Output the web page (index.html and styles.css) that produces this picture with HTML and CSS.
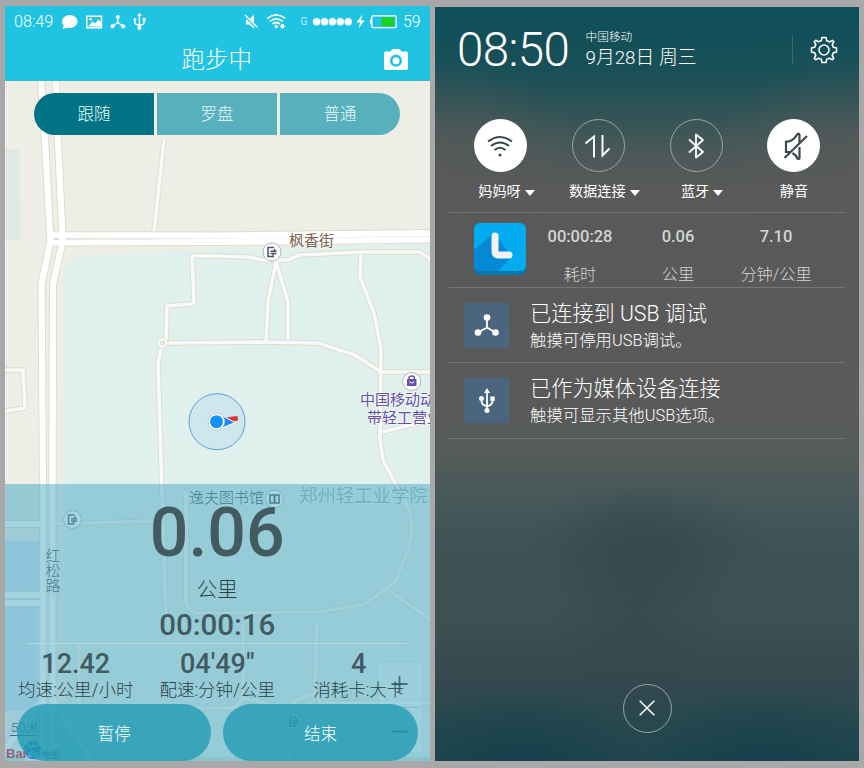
FILE: index.html
```html
<!DOCTYPE html>
<html lang="zh-CN">
<head>
<meta charset="utf-8">
<title>跑步中</title>
<link rel="stylesheet" href="styles.css">
</head>
<body>
<main class="board">
<section class="phone run">
  <header class="topbar">
    <div class="status">
      <span class="clock">08:49</span>
      <svg class="status-left" width="90" height="20" viewBox="60 10 90 20">
        <g fill="#fff">
          <ellipse cx="69.800" cy="20.500" rx="7.800" ry="6.500"/><path d="M64 24l-1.500 4 6-1.500z"/>
          <path fill-rule="evenodd" d="M86 14.500h16.200V27.500H86zM87.500 16v10h13.200V16z"/>
          <path d="M88 25.500l4.500-5 2.500 2 3.500-4 2.500 3v4z"/><circle cx="90.500" cy="18.300" r="1.300"/>
          <circle cx="117.800" cy="16" r="2"/><circle cx="112.500" cy="25.300" r="2.100"/><circle cx="123.200" cy="25.300" r="2.100"/>
          <path d="M139.400 11.800l2.300 3.200h-4.600z"/><circle cx="139.400" cy="27" r="2"/><circle cx="134.900" cy="18.600" r="1.500"/><path d="M142.600 17h3v3h-3z"/>
        </g>
        <g fill="none" stroke="#fff" stroke-width="1.400"><path d="M117.800 16v5.500l-5.300 3.800M117.800 21.500l5.400 3.800M139.400 14v12M134.900 19v2.500q0 2 4.500 3M144.100 19v2.500q0 2-4.700 3"/></g>
      </svg>
      <svg class="status-right" width="160" height="20" viewBox="242 10 160 20">
        <path fill="#fff" d="M246 18.300h3.200l4.800-4.500v14l-4.800-4.200H246z"/>
        <path d="M244.500 14.500l12.500 12" stroke="#20c4e2" stroke-width="3"/><path d="M245 14l12.500 12.500" stroke="#fff" stroke-width="1.400"/>
        <g fill="none" stroke="#fff" stroke-width="1.700"><path d="M267.200 17.300q9-7 18 0M269.800 20.300q6.500-5 13 0M272.500 23q3.700-3 7.400 0"/></g>
        <circle cx="276.200" cy="25.500" r="1.700" fill="#fff"/><path d="M281 23h3v2h1.500l-3 3-3-3h1.500z" fill="#fff"/>
        <text x="300.500" y="24.300" class="net">G</text>
        <g fill="#fff"><circle cx="316.600" cy="20.700" r="3.700"/><circle cx="324.500" cy="20.700" r="3.700"/><circle cx="332.400" cy="20.700" r="3.700"/><circle cx="340.300" cy="20.700" r="3.700"/><circle cx="348.200" cy="20.700" r="3.700"/>
        <path d="M362.500 13.500l-6 8h3.700l-1.700 6 6-8h-3.600z"/><path d="M370 18.500h1.500v4.500H370z"/></g>
        <rect x="371.800" y="14.800" width="24.400" height="11.800" rx="1" fill="none" stroke="#fff" stroke-width="1.300"/>
        <path fill="#1bd31c" d="M381.500 16.300H394v9h-12.500z"/>
      </svg>
      <span class="battery">59</span>
    </div>
    <div class="titlebar">
      <h1>跑步中</h1>
      <svg class="camera" width="24" height="23" viewBox="0 0 24 23"><path fill="#fff" d="M9 1h6q1 0 1.500 1l.7 1.500H22q2 0 2 2v14.500q0 2-2 2H2q-2 0-2-2V5.500q0-2 2-2h4.800L7.500 2Q8 1 9 1z"/><circle cx="12" cy="12.700" r="4.800" fill="none" stroke="#20c4e2" stroke-width="2.600"/></svg>
    </div>
  </header>

  <div class="map">
    <svg class="map-art" width="424.500" height="680" viewBox="5 81 424.500 680">
      <defs>
        <g id="exit"><circle r="9" fill="#fff" stroke="#a9b9b6" stroke-width="1"/><path d="M2-4.500h-6v9h6M-1.500-.8h6M2.500-3v2M-1.500 1.500h6M1 1.500v2" fill="none" stroke="#456" stroke-width="1.500"/></g>
        <path id="side" d="M164 140l-10 92M154 231v8M5 370h18l2 38-20 3
          M216 256h-24l2 45-2 3-25 2-1 38M166 343l95-1 57 1 37 12 26 17h50M162 346l-4 17 4 130 4 125
          M216 256l34 1 11 3h27l11-5 63-3h57l9 5 2 4M276 262l-8 40-2 39M276 262l12 40v37
          M361 253l-1 24 14 36 7 36-1 91 3 20 27 52 2 18-3 18-14 34-30 22-45 8-125 1-6-4-3-6v-110M382 432l48-12M393 593l40 29
          M45 524l115-3M317 623l-2 65 5 15h112M243 625v73l-8 10H85q-6-2-6-7v-56M243 698l24 5 3 60M270 727h20v35M290 727l4-26 21-8"/>
      </defs>
      <path fill="#efeee6" d="M5 81h425v680H5z"/>
      <path fill="#e0eae5" d="M5 149h14.500l1 91.500H5zM5 484h35v36H5z"/>
      <path fill="#cfdff0" d="M5 541h35v50H5zM5 606h33v105H5z"/>
      <path fill="#e0f0ec" d="M64 268l16-12 136-7 214-5v517H66z"/>
      <path fill="#c4e2cc" d="M60 761v-38l27 34h343v4zM5 757h20v4H5z"/>
      <g fill="none" stroke-linejoin="round"><use href="#side" stroke="#d9dccd" stroke-width="5.400"/><use href="#side" stroke="#f9f9f7" stroke-width="3.700"/>
      <circle cx="162.500" cy="343" r="3.800" stroke="#d9dccd" stroke-width="4"/><circle cx="162.500" cy="343" r="3.800" stroke="#f9f9f7" stroke-width="2.600"/>
      <g stroke="#d9dccd" stroke-width="8"><path d="M41 81l4 60 5.500 100-9 43 1.500 200v277M56 81l2 60 4.700 100-9.700 43-.5 200v277M49 235l167 .5 214-2.500M49 242.500l167-.5 214-2.500M5 524h40M5 595h38M5 603h38M43 700l-40 52M53 700l40 61"/></g>
      <g stroke="#fff" stroke-width="6.200"><path d="M41 81l4 60 5.500 100-9 43 1.500 200v277M56 81l2 60 4.700 100-9.700 43-.5 200v277M49 235l167 .5 214-2.500M49 242.500l167-.5 214-2.500M5 524h40M5 595h38M5 603h38M43 700l-40 52M53 700l40 61"/></g>
      <path d="M54 239h5" stroke="#d9dccd" stroke-width="2"/><path d="M68 239h84" stroke="#e2e4da"/></g>
      <circle cx="217" cy="421.700" r="28" fill="#cfe6ec" stroke="#5ba0dc" stroke-width="1"/>
      <path d="M226 417.500l10-1.500q2 0 2 2v2.500l-11 3z" fill="#df3a42"/>
      <path d="M222 415.500l13 7-13 5.500z" fill="#1a8cf4" stroke="#fff"/>
      <circle cx="216.500" cy="421.700" r="8.200" fill="#fff" stroke="#bbb" stroke-width=".7"/><circle cx="216.500" cy="421.700" r="6.500" fill="#1490fa"/>
      <use href="#exit" x="272" y="252"/><use href="#exit" x="72.500" y="519.500"/><use href="#exit" x="294" y="721.500"/>
      <circle cx="411.700" cy="381.500" r="9" fill="#fff" stroke="#a9b9b6"/>
      <path d="M407 379h9.500v7H407z" fill="#6650b0"/><path d="M409 379v-1q0-2 2.700-2t2.700 2v1" fill="none" stroke="#6650b0" stroke-width="1.500"/><path d="M409.300 381.500q2.400 3 4.800 0" fill="none" stroke="#fff" stroke-width="1.200"/>
      <circle cx="274.500" cy="499" r="9" fill="#fff" stroke="#a9b9b6"/><path d="M270 495h4.300v8H270zM274.700 495h4.300v8h-4.300z" fill="none" stroke="#345" stroke-width="1.500"/>
      <g class="place">
        <text class="street" x="289" y="245.500">枫香街</text>
        <text class="shop" x="360" y="405">中国移动动</text>
        <text class="shop" x="367" y="422.500">带轻工营业</text>
        <text class="library" x="189" y="503">逸夫图书馆</text>
        <text class="school" x="299" y="502">郑州轻工业学院</text>
        <text class="road" x="45.500" y="560.500">红</text><text class="road" x="45.500" y="575.500">松</text><text class="road" x="45.500" y="590.500">路</text>
      </g>
      <rect x="378" y="662" width="44" height="91" rx="2" fill="#fff" fill-opacity=".45" stroke="#d3e0e0"/>
      <path d="M382 707.500h37" stroke="#b7c6c8"/><path d="M391.500 684h16M399.500 676v16M391.500 731.500h16" stroke="#222" stroke-width="1.800"/>
      <text class="scale" x="11" y="732">50米</text><path d="M10 735.500h27" stroke="#223"/>
      <g class="baidu"><text x="6" y="758" fill="#d8001e">Bai</text><g fill="#0837d8"><ellipse cx="33" cy="753" rx="7.500" ry="6"/><circle cx="26.500" cy="747" r="2.300"/><circle cx="30.500" cy="743.500" r="2.300"/><circle cx="35.500" cy="743.500" r="2.300"/><circle cx="39" cy="748" r="2.300"/></g><text x="27.500" y="757" class="du">du</text><text x="41" y="758" class="ditu">地图</text></g>
    </svg>
    <nav class="tabs"><span class="tab active">跟随</span><span class="tab">罗盘</span><span class="tab">普通</span></nav>
    <div class="panel">
      <div class="distance">0.06</div>
      <div class="unit">公里</div>
      <div class="elapsed">00:00:16</div>
      <div class="stats">
        <div><b>12.42</b><span>均速:公里/小时</span></div>
        <div><b>04'49"</b><span>配速:分钟/公里</span></div>
        <div><b>4</b><span>消耗卡:大卡</span></div>
      </div>
      <div class="actions"><button>暂停</button><button>结束</button></div>
    </div>
  </div>
</section>

<section class="phone shade">
  <header class="head">
    <span class="bigclock">08:50</span>
    <div class="date"><span class="carrier">中国移动</span><span class="day">9月28日 周三</span></div>
    <div class="settings">
      <svg width="28" height="28" viewBox="-14 -14 28 28" fill="none" stroke="#fff" stroke-width="1.600" stroke-linejoin="round"><circle r="5"/><path d="M-2-12.500H2L2.700-9.300Q4.300-9 5.500-8L8.400-9.600 9.800-8.200 8.200-5.400Q9-4.200 9.300-2.700L12.500-2V2L9.300 2.700Q9 4.300 8.200 5.500L9.800 8.300 8.300 9.800 5.500 8.200Q4.300 9 2.700 9.300L2 12.500H-2L-2.700 9.300Q-4.300 9-5.500 8.200L-8.300 9.800-9.800 8.300-8.200 5.500Q-9 4.300-9.300 2.700L-12.500 2V-2L-9.300-2.700Q-9-4.300-8.200-5.500L-9.800-8.300-8.300-9.800-5.500-8.200Q-4.300-9-2.700-9.300z"/></svg>
    </div>
  </header>
  <div class="toggles">
    <div class="toggle on"><i><svg width="30" height="30" viewBox="-15 -15 30 30" fill="none" stroke="#3c484b" stroke-width="2"><path d="M-12-4.500q12-9 24 0M-9 0q9-7 18 0M-5.500 4q5.500-4.500 11 0"/><circle cy="9" r="1.500" fill="#3c484b" stroke="none"/></svg></i><span class="more">妈妈呀</span></div>
    <div class="toggle"><i><svg width="30" height="30" viewBox="-15 -15 30 30" fill="none" stroke="#fff" stroke-width="1.900"><path d="M-12.500-2.500L-4-9.500V11.500M4.500-11V9.500L11.500 2.500"/></svg></i><span class="more">数据连接</span></div>
    <div class="toggle"><i><svg width="30" height="30" viewBox="-15 -15 30 30" fill="none" stroke="#fff" stroke-width="1.800" stroke-linejoin="round"><path d="M-7-6.500L7 6 0 11.500V-11.500L7-6-7 6.500"/></svg></i><span class="more">蓝牙</span></div>
    <div class="toggle on"><i><svg width="30" height="30" viewBox="-15 -15 30 30" fill="none" stroke="#3c484b" stroke-width="2.200"><path d="M-4 6h-4V-4.500h3Q1-7 3-11.500q2.500-2 2.500 1V-3M5.500 1v11q0 1.500-2 .5Q2 9-1.500 7"/><path d="M-9.500 12L13-10"/></svg></i><span>静音</span></div>
  </div>
  <div class="row summary">
    <svg class="app" width="52" height="52" viewBox="0 0 52 52"><rect width="52" height="52" rx="6" fill="#0778ae"/><rect width="52" height="48" rx="6" fill="#03acef"/><path d="M0 27L20 10l18 24-14 14H6q-6 0-6-6z" fill="#0589d5"/><path d="M21 13v15q0 4 4 4h10" fill="none" stroke="#f4f4f6" stroke-width="7" stroke-linecap="round"/></svg>
    <div class="cell"><b>00:00:28</b><span>耗时</span></div>
    <div class="cell"><b>0.06</b><span>公里</span></div>
    <div class="cell"><b>7.10</b><span>分钟/公里</span></div>
  </div>
  <div class="row note">
    <svg class="thumb" width="45" height="45" viewBox="0 0 45 45"><path fill="#4c657e" d="M0 0h45v45H0z"/><g fill="#fff"><circle cx="23" cy="14.500" r="3.300"/><circle cx="14" cy="29.500" r="3.300"/><circle cx="31.500" cy="29.500" r="3.300"/></g><path d="M23 14v10.500L14 29.500M23 24.500l8.500 5" fill="none" stroke="#fff" stroke-width="1.800"/></svg>
    <div><h2>已连接到 USB 调试</h2><p>触摸可停用USB调试。</p></div>
  </div>
  <div class="row note">
    <svg class="thumb" width="45" height="45" viewBox="0 0 45 45"><path fill="#4c657e" d="M0 0h45v45H0z"/><g fill="#fff"><path d="M23 10l3 5h-6z"/><circle cx="23" cy="32.500" r="2.500"/><circle cx="17.500" cy="20.500" r="2.500"/><path d="M26.300 18.500h4.400v4.400h-4.400z"/></g><path d="M23 13v18M17.500 21v2q0 4 5.500 5.500M28.500 21v2q0 4-5.500 5.500" fill="none" stroke="#fff" stroke-width="1.800"/></svg>
    <div><h2>已作为媒体设备连接</h2><p>触摸可显示其他USB选项。</p></div>
  </div>
  <footer class="foot"><i class="close"><svg width="16" height="16" viewBox="0 0 16 16" stroke="#fff" stroke-width="1.500"><path d="M.7.7l14.600 14.600M15.300.7L.7 15.300"/></svg></i></footer>
</section>
</main>
</body>
</html>
```
FILE: styles.css
```css
* { box-sizing: border-box; margin: 0; padding: 0; }
body {
  width: 864px; height: 768px; overflow: hidden; background: #a8a8a8;
  font-family: Roboto, "Noto Sans CJK SC", sans-serif; font-weight: 300;
}
.board { display: flex; gap: 5.500px; padding: 6px 5px 7px; height: 768px; }
.phone { height: 755px; overflow: hidden; flex: none; }

/* Running screen */
.run { width: 424.500px; }
.topbar { height: 75px; background: #20c4e2; color: #fff; border-bottom: 1px solid #3fb7cb; }
.status { display: flex; align-items: center; height: 29px; padding-left: 9px; font-size: 16.200px; }
.clock { width: 46px; white-space: nowrap; padding-top: 1px; }
.status-left { width: 90px; }
.status-right { margin-left: 92px; }
.battery { margin-left: 1px; font-size: 15.700px; padding-top: 1px; }
.net { font: 300 10px Roboto, sans-serif; fill: #fff; }
.titlebar { display: grid; grid-template-columns: 1fr 24px; align-items: center; height: 44px; padding-right: 22px; }
h1 { font-size: 23.500px; font-weight: 300; text-align: center; padding: 2px 0 0 45px; line-height: 46px; }
.map { position: relative; height: 680px; padding: 12px 29.500px 12px 29px; }
.map-art { position: absolute; left: 0; top: 0; }
.place, .scale { font-family: Roboto, "Noto Sans CJK SC", sans-serif; font-size: 15px; font-weight: 400; }
.place text { paint-order: stroke; stroke: #fff; stroke-width: 2px; stroke-opacity: .5; }
.street { fill: #7d624e; }
.shop { fill: #6750ad; }
.library, .road { fill: #263c40; font-weight: 300; }
.place .library, .place .road { stroke-opacity: .15; }
.school { font-size: 18.400px; fill: #86b4b8; }
.scale { font-size: 13px; font-weight: 300; fill: #001; }
.baidu { font: 700 13px "Liberation Sans", "Noto Sans CJK SC", sans-serif; }
.baidu .du { font-size: 9px; fill: #fff; }
.baidu .ditu { font-size: 9.500px; fill: #456; }
.tabs { position: relative; display: flex; gap: 3px; height: 41.500px; border-radius: 21px; overflow: hidden; }
.tab { flex: 1; background: rgba(49, 160, 177, .8); color: #e6fafa; font-size: 16.500px; line-height: 43px; text-align: center; }
.tab.active { background: #007385; }
.panel {
  position: absolute; left: 0; right: 0; bottom: 0; height: 277px; padding-top: 23px;
  background: rgba(89, 174, 200, .55); color: #2c4248; text-align: center;
}
.distance { font-size: 68px; font-weight: 500; line-height: 52px; color: #435a61; }
.unit { margin-top: 16px; font-size: 20.500px; line-height: 30px; }
.elapsed { margin-top: 5px; font-size: 29.500px; font-weight: 500; line-height: 31px; color: #435a61; }
.stats { position: relative; display: grid; grid-template-columns: repeat(3, 1fr); margin-top: 2px; padding-top: 7px; }
.stats::before { content: ""; position: absolute; left: 23px; right: 24px; top: 0; height: 1px; background: #b9d8d9; }
.stats b { display: block; font-size: 27px; font-weight: 500; line-height: 28px; color: #435a61; }
.stats span { display: block; font-size: 17.500px; line-height: 25px; white-space: nowrap; }
.actions { display: flex; gap: 12px; padding: 1px 12px 0; }
button { width: 194.500px; height: 57px; border: 0; border-radius: 29px; background: rgba(29, 154, 178, .78); color: #fff; font: inherit; font-size: 16.500px; }

/* Notification shade */
.shade {
  width: 424px; height: 754px; margin-top: 1px; color: #fff; display: flex; flex-direction: column;
  background:
    radial-gradient(ellipse 120px 70px at 212px 540px, rgba(50, 70, 77, .6) 10%, transparent),
    radial-gradient(ellipse 90px 140px at 200px 620px, rgba(50, 70, 77, .5) 10%, transparent),
    radial-gradient(ellipse 130px 70px at 85px 754px, rgba(20, 62, 74, .7), transparent),
    radial-gradient(ellipse 130px 70px at 330px 754px, rgba(20, 62, 74, .7), transparent),
    radial-gradient(ellipse 150px 110px at 0 160px, rgba(90, 90, 90, .8), transparent),
    radial-gradient(ellipse 150px 110px at 424px 160px, rgba(90, 90, 90, .8), transparent),
    linear-gradient(#0d4f5b, #1a5057 65px, #2d5356 100px, #485858 140px, #595959 180px, #5a5a5a 400px, #545c5a 450px, #46585a 495px, #3d5355 540px, #3c5252 610px, #36494f 670px, #27494e 710px, #20464e 754px);
}
.head { display: flex; height: 112px; padding-left: 22px; flex: none; }
.bigclock { width: 128.500px; font-size: 47.500px; letter-spacing: -.6px; line-height: 86px; white-space: nowrap; }
.date { width: 206.500px; display: flex; flex-direction: column; padding-top: 21px; }
.carrier { font-size: 11.700px; line-height: 18px; }
.day { font-size: 18.800px; line-height: 25px; white-space: pre; }
.settings { height: 28px; margin-top: 29px; border-left: 1px solid #3c6c73; padding-left: 17px; }
.toggles { display: grid; grid-template-columns: repeat(4, 97.800px); height: 93px; padding-left: 16.600px; flex: none; }
.toggle { text-align: center; font-size: 14.200px; font-weight: 400; line-height: 24px; }
.toggle i, .close { display: flex; align-items: center; justify-content: center; width: 53px; height: 53px; border: 1px solid #9aa5a6; border-radius: 50%; margin: 0 auto 7px; }
.toggle.on i { background: #fff; border-color: #fff; }
.more { display: inline-flex; align-items: center; gap: 4px; padding-left: 12px; white-space: nowrap; }
.more::after { content: ""; border: 5px solid transparent; border-top: 6px solid #fff; border-bottom: 0; margin-top: 3px; }
.row { display: flex; height: 75.200px; margin: 0 14px; border-top: 1px solid #747676; flex: none; }
.app { margin: 10px 5.500px 0 24.500px; }
.cell { width: 98px; text-align: center; color: #d4d4d4; white-space: nowrap; }
.cell b { display: block; padding-top: 12px; font-size: 16.500px; font-weight: 500; line-height: 24px; }
.cell span { display: block; padding-top: 14px; font-size: 16.200px; line-height: 24px; }
.thumb { margin: 15px 21px 0 15px; }
.note h2 { padding-top: 12px; font-size: 21.200px; font-weight: 300; line-height: 28px; }
.note p { font-size: 16.400px; line-height: 25px; }
.foot { flex: 1; border-top: 1px solid #6c7776; margin: 0 14px; padding-top: 245px; }
.close { width: 49px; height: 49px; margin: 0 auto; }
```
